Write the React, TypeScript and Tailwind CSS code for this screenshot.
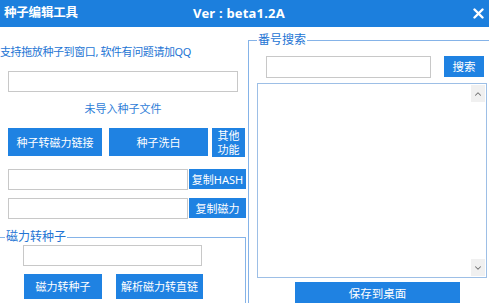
import { ChevronUp, ChevronDown } from "lucide-react";

const BTN = "bg-[#1f82e2] text-white flex items-center justify-center leading-none";

export default function App() {
  return (
    <div className="w-[489px] h-[303px] overflow-hidden bg-white font-['Noto_Sans','Noto_Sans_CJK_SC',sans-serif]">
      {/* Title bar */}
      <div className="h-[27px] bg-[#1c7fdd] flex items-center text-white font-bold">
        <span className="w-[193px] pl-[4px] text-[12.5px] tracking-[-0.2px]">种子编辑工具</span>
        <span className="text-[13px] tracking-[0.2px]">Ver : beta1.2A</span>
        <svg className="ml-auto mr-[5px]" width="11" height="11" viewBox="0 0 11 11">
          <path d="M1.5 1.5 L9.5 9.5 M9.5 1.5 L1.5 9.5" stroke="white" strokeWidth="2.4" strokeLinecap="round" />
        </svg>
      </div>

      <div className="flex">
        {/* Left column */}
        <div className="w-[247px] flex flex-col">
          <p className="mt-[18px] text-[11px] leading-[14px] tracking-[-0.4px] text-[#2374d4] whitespace-nowrap">
            支持拖放种子到窗口, 软件有问题请加QQ
          </p>
          <div className="mt-[12px] ml-[8px] w-[230px] h-[21px] border border-[#c8c8c8] bg-white" />
          <p className="mt-[10px] text-center text-[11px] leading-[14px] text-[#2f80d8]">未导入种子文件</p>

          <div className="mt-[12px] ml-[8px] flex items-start text-[11px]">
            <button className={`${BTN} w-[94px] h-[28px]`}>种子转磁力链接</button>
            <button className={`${BTN} ml-[7px] w-[99px] h-[28px]`}>种子洗白</button>
            <button className={`${BTN} ml-[4px] w-[33px] h-[29px] flex-col`}>
              <span className="block text-[11px] leading-[14px]">其他</span>
              <span className="block text-[11px] leading-[14px]">功能</span>
            </button>
          </div>

          <div className="mt-[12px] ml-[8px] flex text-[11px]">
            <div className="w-[180px] h-[21px] border border-[#c8c8c8]" />
            <button className={`${BTN} ml-px w-[57px] h-[20px]`}>复制HASH</button>
          </div>
          <div className="mt-[8px] ml-[8px] flex text-[11px]">
            <div className="w-[180px] h-[21px] border border-[#c8c8c8]" />
            <button className={`${BTN} ml-px w-[57px] h-[20px]`}>复制磁力</button>
          </div>

          <fieldset className="mt-[10px] w-[246px] border border-l-0 border-[#85b3e8] pb-[10px]">
            <legend className="ml-[5px] px-px text-[12px] leading-[16px] text-[#2374d4]">磁力转种子</legend>
            <div className="ml-[23px] w-[179px] h-[21px] border border-[#c8c8c8]" />
            <div className="mt-[8px] ml-[24px] flex text-[11px]">
              <button className={`${BTN} w-[78px] h-[25px]`}>磁力转种子</button>
              <button className={`${BTN} ml-[14px] w-[87px] h-[25px]`}>解析磁力转直链</button>
            </div>
          </fieldset>
        </div>

        {/* Right column */}
        <fieldset className="ml-[2px] mt-[5px] w-[250px] shrink-0 border border-[#85b3e8] pb-[10px]">
          <legend className="ml-[8px] px-px text-[12px] leading-[16px] text-[#2374d4]">番号搜索</legend>
          <div className="mt-[8px] flex items-start">
            <div className="ml-[17px] w-[165px] h-[22px] border border-[#c8c8c8]" />
            <button className={`${BTN} ml-[13px] w-[40px] h-[21px] text-[11.5px]`}>搜索</button>
          </div>
          <div className="mt-[5px] ml-[8px] w-[230px] h-[195px] border border-[#9dbfe6] flex justify-end">
            <div className="w-[15px] flex flex-col justify-between py-px pr-px">
              <div className="h-[17px] bg-[#f0f0f0] flex items-center justify-center">
                <ChevronUp size={10} strokeWidth={2.5} color="#707070" />
              </div>
              <div className="h-[17px] bg-[#f0f0f0] flex items-center justify-center">
                <ChevronDown size={10} strokeWidth={2.5} color="#707070" />
              </div>
            </div>
          </div>
          <button className={`${BTN} mt-[4px] ml-[46px] w-[165px] h-[24px] text-[11.5px]`}>保存到桌面</button>
        </fieldset>
      </div>
    </div>
  );
}
